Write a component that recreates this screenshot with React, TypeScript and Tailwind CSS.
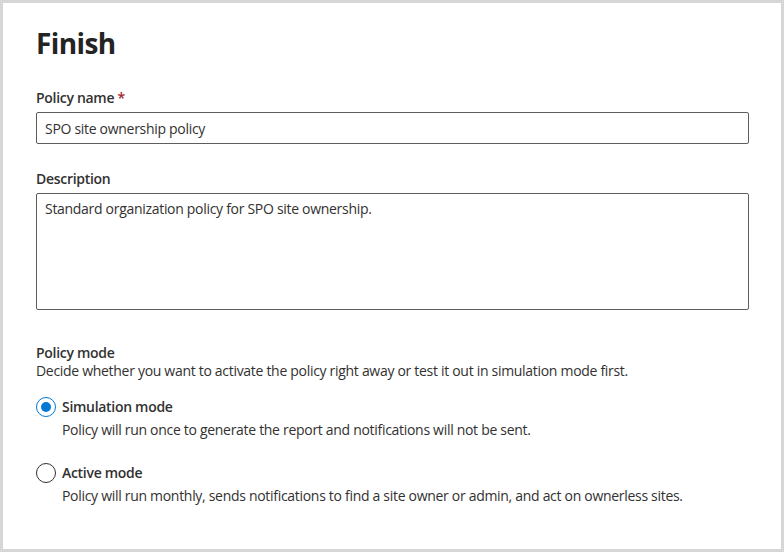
import React from "react";

export default function App() {
  const font = { fontFamily: '"Open Sans", "Noto Sans", sans-serif' };
  return (
    <div className="w-[784px] h-[552px] bg-[#d6d6d6] p-[3px]" style={font}>
      <div className="w-full h-full bg-white pl-[33px] pr-[32px] text-[#323130] tracking-[-0.3px]">
        <h1 className="text-[28px] font-bold leading-[36px] pt-[22px] text-[#242424] tracking-[-0.6px]">Finish</h1>
        <div className="mt-[27px]">
          <label className="block text-[14px] font-semibold leading-[20px]">
            Policy name <span className="text-[#a4262c]">*</span>
          </label>
          <div className="mt-[4px] h-[32px] border border-[#605e5c] rounded-[2px] flex items-center px-[8px] text-[14px]">
            SPO site ownership policy
          </div>
        </div>
        <div className="mt-[25px]">
          <label className="block text-[14px] font-semibold leading-[20px]">Description</label>
          <div className="mt-[4px] h-[117px] border border-[#605e5c] rounded-[2px] px-[8px] py-[5px] text-[14px] leading-[20px]">
            Standard organization policy for SPO site ownership.
          </div>
        </div>
        <div className="mt-[33px]">
          <div className="text-[14px] font-semibold leading-[20px]">Policy mode</div>
          <div className="text-[14px] leading-[20px] mt-[-2px]">
            Decide whether you want to activate the policy right away or test it out in simulation mode first.
          </div>
          <div className="mt-[16px]">
            <div className="flex items-center gap-[6px]">
              <span className="w-[20px] h-[20px] rounded-full border border-[#0078d4] flex items-center justify-center">
                <span className="w-[10px] h-[10px] rounded-full bg-[#0078d4]" />
              </span>
              <span className="text-[14px] font-semibold leading-[20px]">Simulation mode</span>
            </div>
            <div className="pl-[26px] mt-[3px] text-[14px] leading-[20px]">
              Policy will run once to generate the report and notifications will not be sent.
            </div>
          </div>
          <div className="mt-[23px]">
            <div className="flex items-center gap-[6px]">
              <span className="w-[20px] h-[20px] rounded-full border border-[#323130]" />
              <span className="text-[14px] font-semibold leading-[20px]">Active mode</span>
            </div>
            <div className="pl-[26px] mt-[3px] text-[14px] leading-[20px]">
              Policy will run monthly, sends notifications to find a site owner or admin, and act on ownerless sites.
            </div>
          </div>
        </div>
      </div>
    </div>
  );
}
